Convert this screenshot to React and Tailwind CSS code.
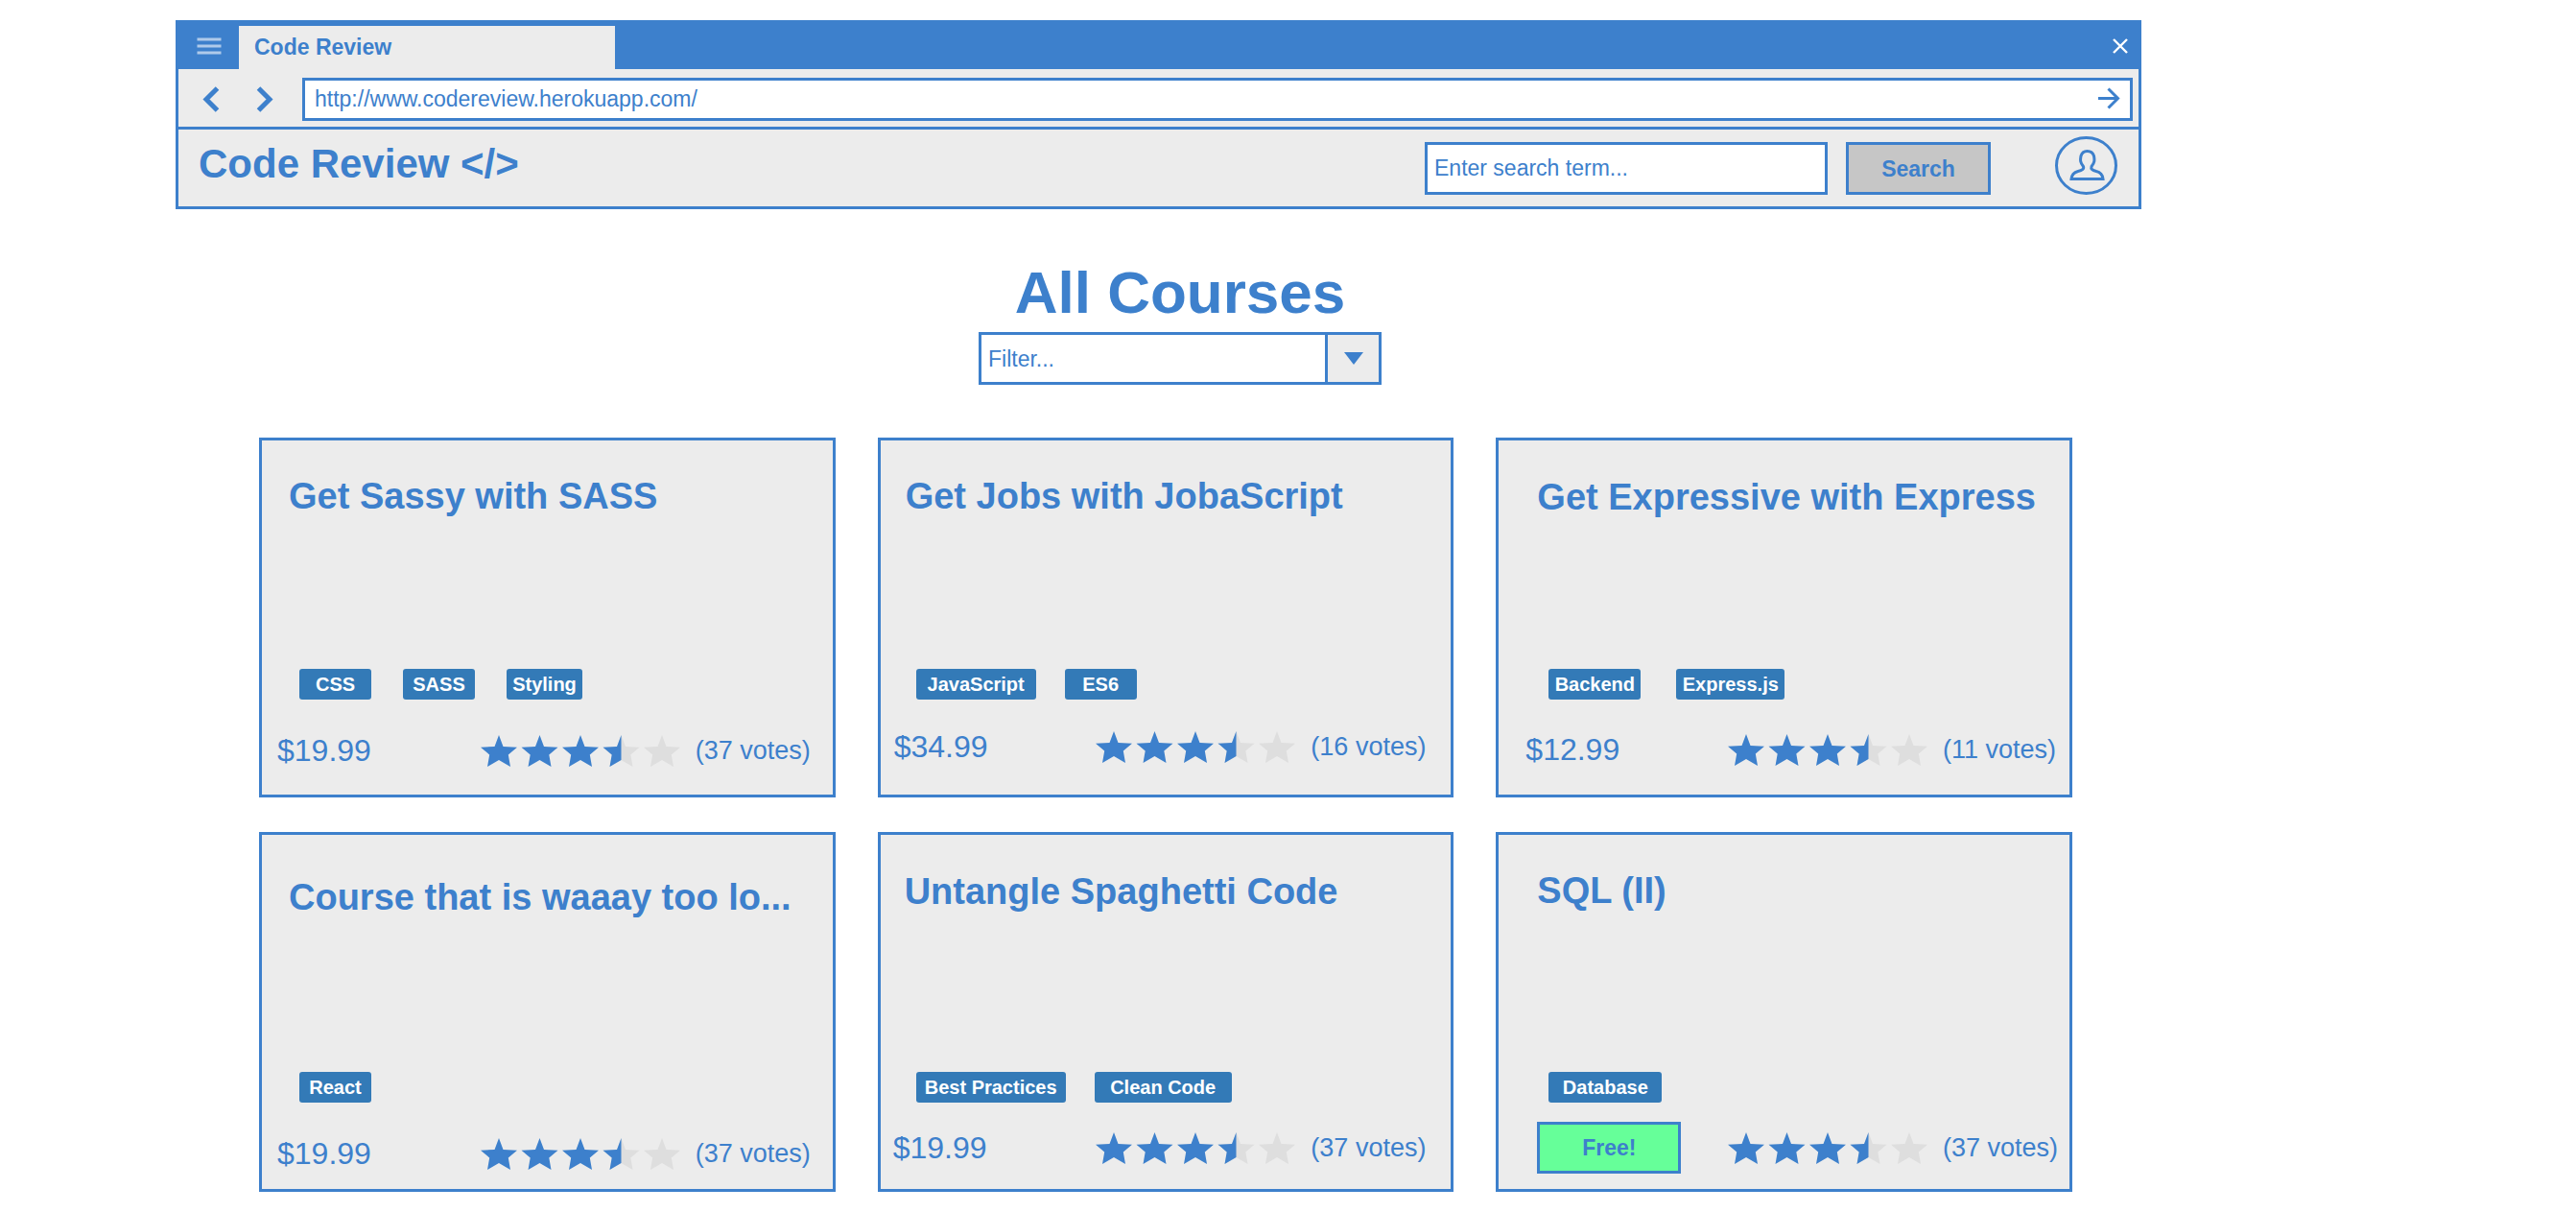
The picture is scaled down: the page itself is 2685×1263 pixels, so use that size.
const courses = [
  { title: "Get Sassy with SASS", tags: [["CSS", "w-[75px]"], ["SASS", "w-[75px]"], ["Styling", "w-[79px]"]], price: "$19.99", votes: 37,
    head: "pt-9 pl-7", tagRow: "pl-[39px] gap-[33px] mb-[26px]", foot: "pl-4 pr-[22px] mb-[19px]" },
  { title: "Get Jobs with JobaScript", tags: [["JavaScript", "w-[125px]"], ["ES6", "w-[75px]"]], price: "$34.99", votes: 16,
    head: "pt-9 pl-[26px]", tagRow: "pl-[37px] gap-[30px] mb-[22px]", foot: "pl-[14px] pr-[25px] mb-[23px]" },
  { title: "Get Expressive with Express", tags: [["Backend", "w-[96px]"], ["Express.js", "w-[113px]"]], price: "$12.99", votes: 11,
    head: "pt-[37px] pl-10", tagRow: "pl-[52px] gap-[37px] mb-[25px]", foot: "pl-7 pr-[11px] mb-5" },
  { title: "Course that is waaay too lo...", tags: [["React", "w-[75px]"]], price: "$19.99", votes: 37,
    head: "pt-[43px] pl-7", tagRow: "pl-[39px] gap-[33px] mb-[26px]", foot: "pl-4 pr-[22px] mb-[10px]" },
  { title: "Untangle Spaghetti Code", tags: [["Best Practices", "w-[156px]"], ["Clean Code", "w-[143px]"]], price: "$19.99", votes: 37,
    head: "pt-[37px] pl-[25px]", tagRow: "pl-[37px] gap-[30px] mb-5", foot: "pl-[13px] pr-[25px] mb-4" },
  { title: "SQL (II)", tags: [["Database", "w-[118px]"]], price: null, votes: 37,
    head: "pt-9 pl-10", tagRow: "pl-[52px] gap-[37px] mb-5", foot: "pl-10 pr-[11px] mb-4" },
];

const STAR = "M19 0L23.5 12L38 12.7L28.8 20.5L31 33L19 26L7 33L9.2 20.5L0 12.7L14.5 12Z";
const HALF_STAR = "M19 0V26L7 33L9.2 20.5L0 12.7L14.5 12Z";

function Stars() {
  return (
    <svg role="img" aria-label="3.5 out of 5 stars" className="h-[33px] w-[208px] shrink-0" viewBox="0 0 208 33">
      {[0, 1, 2, 3, 4].map((i) => (
        <g key={i} transform={`translate(${i * 42.5} 0)`}>
          <path d={STAR} fill={i < 3 ? "#3d80cc" : "#dedede"} />
          {i === 3 && <path d={HALF_STAR} fill="#3d80cc" />}
        </g>
      ))}
    </svg>
  );
}

function CourseCard({ course }) {
  return (
    <article className="flex min-h-[375px] flex-col border-3 border-[#3d80cc] bg-[#ececec]">
      <h2 className={`flex-1 truncate text-[38px] leading-[44px] font-bold ${course.head}`}>{course.title}</h2>
      <ul className={`flex ${course.tagRow}`}>
        {course.tags.map(([name, width]) => (
          <li key={name} className={`flex h-8 items-center justify-center rounded-[3px] bg-[#337ab7] text-[20px] leading-6 font-bold whitespace-nowrap text-white ${width}`}>
            {name}
          </li>
        ))}
      </ul>
      <div className={`flex h-[54px] items-center justify-between ${course.foot}`}>
        {course.price ? (
          <span className="text-[32px] leading-9">{course.price}</span>
        ) : (
          <button className="h-[54px] w-[150px] border-3 border-[#3d80cc] bg-[#66ff99] text-[23px] leading-7 font-bold">Free!</button>
        )}
        <div className="flex items-center gap-4">
          <Stars />
          <span className="w-[121px] text-[27px] leading-8 whitespace-nowrap">({course.votes} votes)</span>
        </div>
      </div>
    </article>
  );
}

export default function App() {
  return (
    <div className="min-h-screen bg-white pt-[21px] pr-[453px] pb-5 pl-[183px] font-['Liberation_Sans',Arial,sans-serif] text-[#3d80cc]">
      <header className="border-3 border-t-0 border-[#3d80cc] bg-[#ececec]">
        <div className="flex h-[51px] items-end justify-between bg-[#3d80cc]">
          <div className="flex items-end">
            <button aria-label="Menu" className="flex h-[45px] w-[63px] items-center justify-center">
              <svg className="mb-1 h-[18px] w-[26px]" viewBox="0 0 26 18" stroke="#afcaea" strokeWidth="3">
                <path d="M0.5 2H25.5M0.5 9H25.5M0.5 16H25.5" />
              </svg>
            </button>
            <div className="flex h-[45px] w-[392px] items-center bg-[#ececec] pb-[2px] pl-4 text-[23px] leading-7 font-bold">Code Review</div>
          </div>
          <button aria-label="Close" className="mr-[11px] mb-4">
            <svg className="h-4 w-4" viewBox="0 0 16 16" stroke="#fff" strokeWidth="2.4">
              <path d="M1 1L15 15M15 1L1 15" />
            </svg>
          </button>
        </div>
        <div className="flex h-[63px] items-center border-b-3 border-[#3d80cc] pt-[2px] pr-[6px] pl-[25px]">
          <button aria-label="Back">
            <svg className="h-[27px] w-[18px]" viewBox="0 0 18 27" fill="none" stroke="#3d80cc" strokeWidth="5">
              <path d="M15.500 2L4 13.500L15.500 25" />
            </svg>
          </button>
          <button aria-label="Forward" className="ml-[38px]">
            <svg className="h-[27px] w-[18px]" viewBox="0 0 18 27" fill="none" stroke="#3d80cc" strokeWidth="5">
              <path d="M2.500 2L14 13.500L2.500 25" />
            </svg>
          </button>
          <form className="ml-[30px] flex h-[45px] flex-1 items-center border-3 border-[#3d80cc] bg-white pr-[10px] pl-[10px]">
            <input aria-label="Address" defaultValue="http://www.codereview.herokuapp.com/" className="flex-1 bg-transparent text-[23px] leading-7 outline-none" />
            <button type="button" aria-label="Go">
              <svg className="h-6 w-6" viewBox="0 0 24 24" fill="none" stroke="#3d80cc" strokeWidth="3">
                <path d="M1 11.500H22M11.500 1.500L21.500 11.500L11.500 21.500" />
              </svg>
            </button>
          </form>
        </div>
        <div className="flex h-20 items-start justify-between pr-[22px] pl-[21px]">
          <a href="#" className="mt-3 text-[42px] leading-[48px] font-bold whitespace-nowrap">Code Review &lt;/&gt;</a>
          <div className="flex items-start pt-[7px]">
            <form className="flex gap-[19px] pt-[6px]">
              <input aria-label="Search term" placeholder="Enter search term..." className="h-[55px] w-[420px] border-3 border-[#3d80cc] bg-white px-[7px] text-[23px] leading-7 outline-none placeholder:text-[#3d80cc] placeholder:opacity-100" />
              <button type="button" className="h-[55px] w-[151px] border-3 border-[#3d80cc] bg-[#c6c6c6] text-[23px] leading-7 font-bold">Search</button>
            </form>
            <button aria-label="Account" className="ml-[67px]">
              <svg className="h-[61px] w-[65px]" viewBox="0 0 65 61" fill="none" stroke="#3d80cc" strokeWidth="3">
                <ellipse cx="32.5" cy="30.5" rx="31" ry="29" />
                <path d="M17 44.500C17.500 39.500 20 37.500 24 36.500C28 35.500 30.500 34 29.500 31.500C25.500 26.500 26.500 24 27 20.500C28 17 30.500 15.500 33.500 15.500C36.500 15.500 39.500 17 40.500 20.500C41 24 42 26.500 38 31.500C37 34 39 35.500 43 36.500C47.500 37.500 49.500 40 50 44.500Z" />
              </svg>
            </button>
          </div>
        </div>
      </header>

      <section className="mt-[51px] flex flex-col items-center pl-[45px]">
        <h1 className="text-[62px] leading-[72px] font-bold">All Courses</h1>
        <div className="relative mt-[5px]">
          <select aria-label="Filter" defaultValue="" className="h-[55px] w-[420px] appearance-none border-3 border-[#3d80cc] bg-white pl-[7px] text-[23px] leading-7 outline-none">
            <option value="">Filter...</option>
          </select>
          <span className="pointer-events-none absolute top-0 right-0 flex h-[55px] w-[59px] items-center justify-center border-3 border-[#3d80cc] bg-[#ececec]">
            <svg className="h-[13px] w-5" viewBox="0 0 20 13" fill="#3d80cc">
              <path d="M0 0H20L10 13Z" />
            </svg>
          </span>
        </div>
      </section>

      <main className="mt-[55px] mr-[72px] ml-[87px] grid grid-cols-3 gap-x-11 gap-y-9">
        {courses.map((course) => (
          <CourseCard key={course.title} course={course} />
        ))}
      </main>
    </div>
  );
}
